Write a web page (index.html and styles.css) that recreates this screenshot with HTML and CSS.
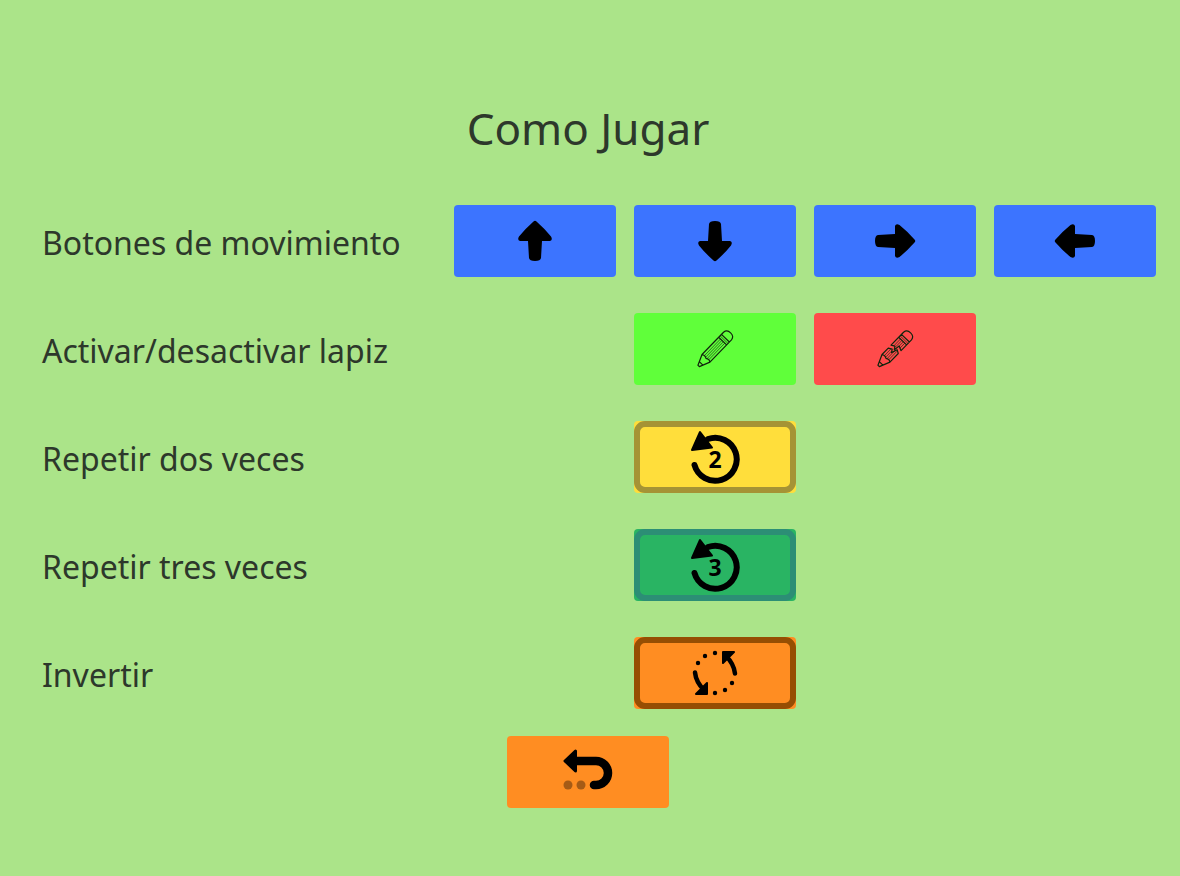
FILE: index.html
```html
<!DOCTYPE html>
<html lang="es">
<head>
<meta charset="utf-8">
<meta name="viewport" content="width=device-width, initial-scale=1">
<title>Como Jugar</title>
<link rel="stylesheet" href="styles.css">
</head>
<body>
<svg class="defs" aria-hidden="true">
  <defs>
    <path id="arrow" d="M-1.500-19.500Q0-21 1.500-19.500Q10-12 16-4.500Q18-1 15 0L7 0L6 17Q5.500 20 0 20Q-5.500 20-6 17L-7 0L-15 0Q-18-1-16-4.500Q-10-12-1.500-19.500Z"/>
    <g id="repeat">
      <path d="M-20.500 8A21.500 21.500 0 1 0-7-18" fill="none" stroke="#000" stroke-width="6" stroke-linecap="round"/>
      <path d="M-15-25L-23-7L-3-9.500Z" stroke="#000" stroke-width="2" stroke-linejoin="round"/>
    </g>
    <g id="half-turn">
      <path d="M20 0.500Q19-9 11-17" fill="none" stroke="#000" stroke-width="4.500" stroke-linecap="round"/>
      <path d="M8-21H19L8-10Z" stroke="#000" stroke-width="2" stroke-linejoin="round"/>
      <circle cx="0" cy="-20" r="2.200"/><circle cx="-10" cy="-17" r="2.200"/><circle cx="-17" cy="-10" r="2.200"/>
    </g>
  </defs>
</svg>
<main class="page">
  <h1 class="title">Como Jugar</h1>
  <div class="guide">
    <p class="label">Botones de movimiento</p>
    <button class="btn blue" type="button" aria-label="Arriba"><svg class="icon" viewBox="-28 -28 56 56"><use href="#arrow"/></svg></button>
    <button class="btn blue" type="button" aria-label="Abajo"><svg class="icon" viewBox="-28 -28 56 56"><use href="#arrow" transform="rotate(180)"/></svg></button>
    <button class="btn blue" type="button" aria-label="Derecha"><svg class="icon" viewBox="-28 -28 56 56"><use href="#arrow" transform="rotate(90)"/></svg></button>
    <button class="btn blue" type="button" aria-label="Izquierda"><svg class="icon" viewBox="-28 -28 56 56"><use href="#arrow" transform="rotate(-90)"/></svg></button>

    <p class="label">Activar/desactivar lapiz</p>
    <button class="btn lime second" type="button" aria-label="Activar lapiz">
      <svg class="icon pencil" viewBox="-28 -28 56 56"><g transform="rotate(-46)">
        <path d="M-23.500-1L-13-5.500H18Q22.500-5 22.500 0T18 5.500H-13L-23.500 1ZM-13-5.500Q-11-3-13 0Q-11 3-13 5.500M-20-2.500V2.500M11-5.500V5.500M15-5.500V5.500"/>
        <path class="fine" d="M-12-3H11M-12-1H11M-12 1H11M-12 3H11M13-5.500V5.500"/>
      </g></svg>
    </button>
    <button class="btn red third" type="button" aria-label="Desactivar lapiz">
      <svg class="icon pencil" viewBox="-28 -28 56 56"><g transform="rotate(-46)">
        <path d="M-23.500-1L-13-5.500H-4L-2-2L-5 0L1 2L-1 5.500H-13L-23.500 1ZM-13-5.500Q-11-3-13 0Q-11 3-13 5.500M-20-2.500V2.500M0-5.500H18Q22.500-5 22.500 0T18 5.500H3L5 1L-1 0L2-2ZM11-5.500V5.500M15-5.500V5.500"/>
        <path class="fine" d="M-12-3H-3M-12-1H-4M-12 1H-2M-12 3H0M2-3H11M2-1H11M5 1H11M4 3H11M13-5.500V5.500"/>
      </g></svg>
    </button>

    <p class="label">Repetir dos veces</p>
    <button class="btn yellow second" type="button" aria-label="Repetir dos veces"><span class="frame"><svg class="icon" viewBox="-28 -28 56 56"><use href="#repeat"/><text class="digit" x="0" y="11">2</text></svg></span></button>

    <p class="label">Repetir tres veces</p>
    <button class="btn green second" type="button" aria-label="Repetir tres veces"><span class="frame"><svg class="icon" viewBox="-28 -28 56 56"><use href="#repeat"/><text class="digit" x="0" y="11">3</text></svg></span></button>

    <p class="label">Invertir</p>
    <button class="btn orange second" type="button" aria-label="Invertir"><span class="frame"><svg class="icon" viewBox="-28 -28 56 56"><use href="#half-turn"/><use href="#half-turn" transform="rotate(180)"/></svg></span></button>
  </div>
  <button class="btn orange back" type="button" aria-label="Volver">
    <svg class="icon" viewBox="-28 -28 56 56">
      <path d="M-13-11H8A12 12 0 0 1 8 13H6" fill="none" stroke="#000" stroke-width="8.500" stroke-linecap="round"/>
      <path d="M-23-11L-12.500-21V-1Z" stroke="#000" stroke-width="3" stroke-linejoin="round"/>
      <g opacity=".35"><circle cx="-20" cy="13" r="4.500"/><circle cx="-7" cy="13" r="4.500"/></g>
    </svg>
  </button>
</main>
</body>
</html>
```
FILE: styles.css
```css
* { box-sizing: border-box; }

body {
  margin: 0;
  background: #abe489;
  color: #2d382b;
  font-family: "Comic Sans MS", "Noto Sans", sans-serif;
}

.defs { display: block; width: 0; height: 0; }

.page {
  display: flex;
  flex-direction: column;
  padding: 96px 24px 68px 42px;
}

.title {
  margin: 0 22px 45px 0;
  font-size: 44px;
  font-weight: 400;
  line-height: 64px;
  text-align: center;
}

.guide {
  display: grid;
  grid-template-columns: minmax(0, 1fr) repeat(4, 162px);
  gap: 36px 18px;
  align-items: center;
}

.label {
  grid-column: 1;
  margin: 0;
  padding-top: 4px;
  font-size: 32px;
  line-height: 40px;
  white-space: nowrap;
}

.btn {
  display: flex;
  align-items: center;
  justify-content: center;
  width: 162px;
  height: 72px;
  padding: 0;
  border: 0;
  border-radius: 4px;
  cursor: pointer;
}

.second { grid-column: 3; }
.third { grid-column: 4; }

.blue { background: #3c74ff; }
.lime { background: #60ff3a; }
.red { background: #ff4b4b; }
.yellow { background: #ffde3b; }
.green { background: #29b463; }
.orange { background: #ff8d22; }

.frame {
  display: flex;
  flex: 1;
  align-self: stretch;
  align-items: center;
  justify-content: center;
  border: 6px solid;
  border-radius: 11px;
}

.yellow .frame { border-color: #a59335; }
.green .frame { border-color: #2c8e75; }
.orange .frame { border-color: #964e03; }

.icon { width: 56px; height: 56px; }

.pencil path {
  fill: none;
  stroke: #10240c;
  stroke-width: 1.2;
  stroke-linejoin: round;
}

.pencil .fine { stroke-width: 0.6; }

.digit {
  font: 700 23px "Noto Sans", sans-serif;
  text-anchor: middle;
}

.back {
  align-self: center;
  margin: 27px 22px 0 0;
}
```
